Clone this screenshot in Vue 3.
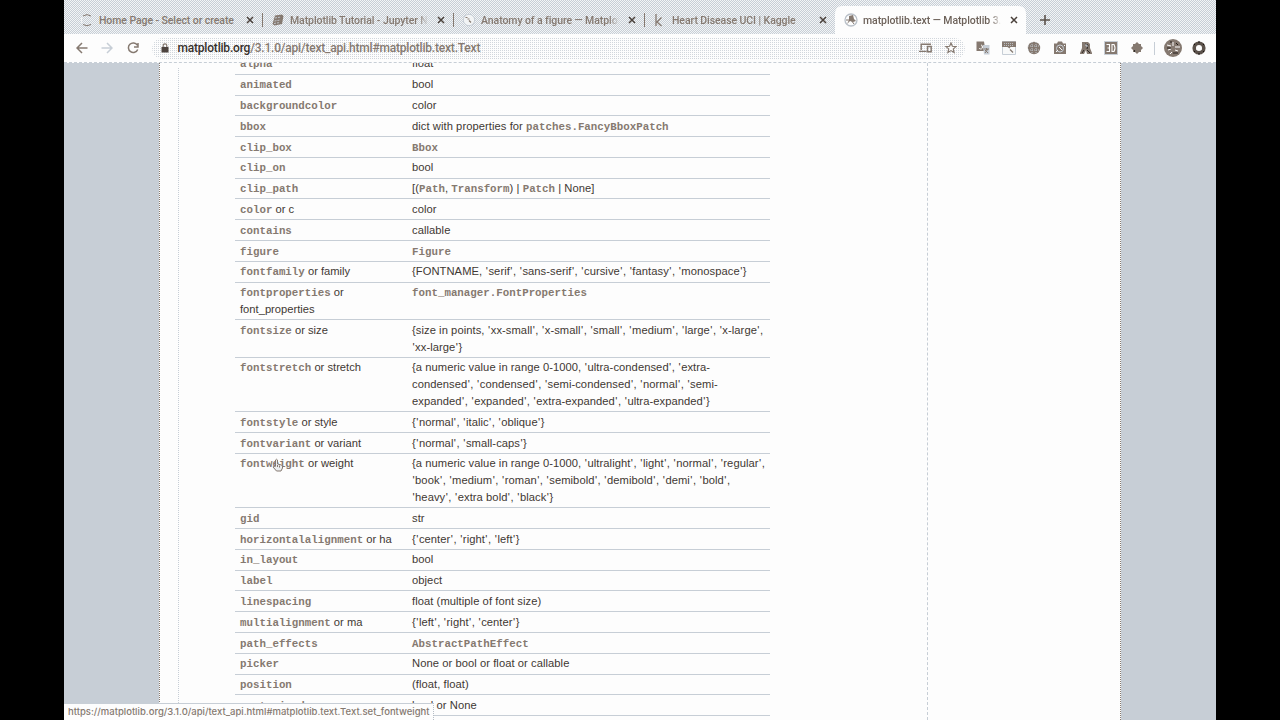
<script setup>
const tabs = [
  { title: 'Home Page - Select or create', icon: 'spinner', cls: 't1' },
  { title: 'Matplotlib Tutorial - Jupyter No', icon: 'book', cls: 't2' },
  { title: 'Anatomy of a figure — Matplotl', icon: 'globe', cls: 't3' },
  { title: 'Heart Disease UCI | Kaggle', icon: 'kaggle', cls: 't4' },
  { title: 'matplotlib.text — Matplotlib 3.1', icon: 'plot', cls: 't5', active: true },
]
const c = (code) => ({ code })
const rows = [
  [[c('alpha')], [['float']]],
  [[c('animated')], [['bool']]],
  [[c('backgroundcolor')], [['color']]],
  [[c('bbox')], [['dict with properties for ', c('patches.FancyBboxPatch')]]],
  [[c('clip_box')], [[c('Bbox')]]],
  [[c('clip_on')], [['bool']]],
  [[c('clip_path')], [['[(', c('Path'), ', ', c('Transform'), ') | ', c('Patch'), ' | None]']]],
  [[c('color'), ' or c'], [['color']]],
  [[c('contains')], [['callable']]],
  [[c('figure')], [[c('Figure')]]],
  [[c('fontfamily'), ' or family'], [["{FONTNAME, 'serif', 'sans-serif', 'cursive', 'fantasy', 'monospace'}"]]],
  [[c('fontproperties'), ' or\nfont_properties'], [[c('font_manager.FontProperties')]]],
  [[c('fontsize'), ' or size'], [["{size in points, 'xx-small', 'x-small', 'small', 'medium', 'large', 'x-large',"], ["'xx-large'}"]]],
  [[c('fontstretch'), ' or stretch'], [["{a numeric value in range 0-1000, 'ultra-condensed', 'extra-"], ["condensed', 'condensed', 'semi-condensed', 'normal', 'semi-"], ["expanded', 'expanded', 'extra-expanded', 'ultra-expanded'}"]]],
  [[c('fontstyle'), ' or style'], [["{'normal', 'italic', 'oblique'}"]]],
  [[c('fontvariant'), ' or variant'], [["{'normal', 'small-caps'}"]]],
  [[c('fontweight'), ' or weight'], [["{a numeric value in range 0-1000, 'ultralight', 'light', 'normal', 'regular',"], ["'book', 'medium', 'roman', 'semibold', 'demibold', 'demi', 'bold',"], ["'heavy', 'extra bold', 'black'}"]]],
  [[c('gid')], [['str']]],
  [[c('horizontalalignment'), ' or ha'], [["{'center', 'right', 'left'}"]]],
  [[c('in_layout')], [['bool']]],
  [[c('label')], [['object']]],
  [[c('linespacing')], [['float (multiple of font size)']]],
  [[c('multialignment'), ' or ma'], [["{'left', 'right', 'center'}"]]],
  [[c('path_effects')], [[c('AbstractPathEffect')]]],
  [[c('picker')], [['None or bool or float or callable']]],
  [[c('position')], [['(float, float)']]],
  [[c('rasterized')], [['bool or None']]],
]
// Quote marks get their own span so they can be set slightly wider.
const pieces = (line) =>
  line.flatMap((p) => (p.code ? [p] : p.split(/(')/).filter(Boolean).map((s) => (s === "'" ? { quote: s } : s))))
</script>

<template>
  <div class="screen">
    <div class="browser">
      <div class="strip">
        <div v-for="t in tabs" :key="t.title" class="tab" :class="{ active: t.active }">
          <svg class="fav" width="14" height="14" viewBox="0 0 14 14">
            <g v-if="t.icon === 'spinner'" fill="none" stroke="#857970" stroke-width="1">
              <path d="M3 3Q7 .2 11 3M3 11.5Q7 14 11 11.5" /><path d="M2 4.5Q.6 7 2 10" stroke="#fdfdfd" />
            </g>
            <g v-else-if="t.icon === 'book'">
              <path d="M4 2.5 11 1.5 12.5 3 11 11 3.5 12.5 1.5 11Z" fill="#857970" />
              <path d="M4 5l6-1M3.5 8l6-1M3 10.5l6-1" stroke="#c7ced6" stroke-width=".9" stroke-dasharray="2 1" />
            </g>
            <g v-else-if="t.icon === 'globe'">
              <circle cx="7" cy="7" r="5.7" fill="#f2f4f5" stroke="#c7ced6" />
              <path d="M3.500 4.500h2M5.500 6h2M7 7.500l2 2" fill="none" stroke="#857970" stroke-width="1.200" />
            </g>
            <path v-else-if="t.icon === 'kaggle'" d="M3 1v12M8.5 4.5 4 9l4.5 4" fill="none" stroke="#857970" stroke-width="1.3" />
            <g v-else>
              <circle cx="7" cy="7" r="6" fill="#fdfdfd" stroke="#b9c0c8" stroke-width="1.3" />
              <path d="M5 3l4-1 1 4 2 2-3 1-3-1-3 3 2-4Z" fill="#857970" /><path d="M7 7l3 4M2 7h3" stroke="#857970" />
            </g>
          </svg>
          <span class="title"><span :class="t.cls">{{ t.title }}</span></span>
          <svg class="close" width="8" height="8" viewBox="0 0 8 8"><path d="M1 1l6 6M7 1 1 7" stroke="#4a413b" stroke-width="1.5" /></svg>
        </div>
        <svg class="plus" width="12" height="12" viewBox="0 0 12 12"><path d="M6 1v10M1 6h10" stroke="#5b514a" stroke-width="1.6" /></svg>
      </div>

      <div class="toolbar">
        <div class="nav">
          <svg width="12" height="12" viewBox="0 0 12 12"><path d="M11.5 6H1.5M6 1 1 6l5 5" fill="none" stroke="#857970" stroke-width="1.5" /></svg>
          <svg width="12" height="12" viewBox="0 0 12 12"><path d="M.5 6h10M6 1l5 5-5 5" fill="none" stroke="#c7ced6" stroke-width="1.5" /></svg>
          <svg width="12" height="12" viewBox="0 0 12 12"><path d="M10.3 3.2A4.8 4.8 0 1 0 10.7 7.5M11 1v4H7" fill="none" stroke="#857970" stroke-width="1.5" /></svg>
        </div>
        <div class="pill">
          <svg class="lock" width="8" height="10" viewBox="0 0 8 10"><path d="M2.2 4V2.6a1.8 1.8 0 0 1 3.6 0V4" fill="none" stroke="#857970" stroke-width="1.2" /><path d="M.5 4h7v5.5h-7z" fill="#4d443f" /></svg>
          <span class="url"><b>matplotlib.org</b>/3.1.0/api/text_api.html#matplotlib.text.Text</span>
          <svg class="cast" width="13" height="10" viewBox="0 0 13 10"><path d="M2.2 7V1.3H12M0 8.4h7.5M8.5 3.5h3.7v5.2H8.5z" fill="none" stroke="#857970" stroke-width="1.4" /></svg>
          <svg class="star" width="12" height="12" viewBox="0 0 12 12"><path d="M6 1l1.4 3.3 3.6.3-2.7 2.3.8 3.6L6 8.6l-3.1 1.9.8-3.6L1 4.6l3.6-.3Z" fill="#fdfdfd" stroke="#857970" stroke-width="1.2" /></svg>
        </div>
        <div class="exts">
          <svg viewBox="0 0 14 14"><path d="M.5.5h7.500l1.500 9.500H.5z" fill="#857970" /><path d="M7 4h6.500v9.500H8z" fill="#c7ced6" /><path d="M3 7a2 2 0 1 0 2-3M5.5 6H7" fill="none" stroke="#fdfdfd" /><path d="M8 8h5M10.5 7v2M12 8l-3 4M9 9l3 3" stroke="#857970" /></svg>
          <svg viewBox="0 0 14 14"><path d="M.5.5h13v13H.5z" fill="#f8f9f9" stroke="#c7ced6" /><path d="M0 .5h14V6H8.500L7.500 7.500 5.500 6H0z" fill="#857970" /><path d="M2 2.500h10M2 4.500h10" stroke="#c7ced6" stroke-width=".8" stroke-dasharray="1 1" /><path d="M8 8.500l3 3" stroke="#857970" stroke-width="1.300" /></svg>
          <svg viewBox="0 0 14 14"><circle cx="7" cy="7" r="6.2" fill="#857970" /><path d="M1 5h12M1 9h12M5 1v12M9 1v12" stroke="#c7ced6" stroke-width=".9" stroke-dasharray="1 1" /></svg>
          <svg viewBox="0 0 14 14"><path d="M1 2.500h3l1-2h4l1 2h3v10.500H1z" fill="#857970" /><circle cx="7" cy="7.5" r="3.500" fill="none" stroke="#c7ced6" stroke-width="1" /><path d="M6 6l3 3M3 11l2-2M11 5l1-1" stroke="#fdfdfd" /></svg>
          <svg viewBox="0 0 14 14"><path d="M3 1h6l2 2v4l2 5v1H8l-1-4-2 4H1V12l2-5z" fill="#857970" /><path d="M6 3l3 1-1 4M5 9l-2 3M8 9l3 3" fill="none" stroke="#2b2522" /><path d="M6 4h2v2" fill="none" stroke="#c7ced6" /></svg>
          <svg viewBox="0 0 14 14"><path d="M.5.5h13v13H.5z" fill="#857970" stroke="#c7ced6" /><path d="M2.500 3.500h3v3.500h-2M5.500 7v3.500h-3M8 10.500v-7h2q2 3.500 0 7z" fill="none" stroke="#fdfdfd" stroke-width="1.1" /></svg>
          <svg viewBox="0 0 14 14"><path d="M3 3h2l2-2 2 2h2v2l2 2-2 2v2H9l-2 2-2-2H3V9L1 7l2-2z" fill="#857970" /><circle cx="4.5" cy="10" r=".7" /></svg>
        </div>
        <i class="bar"></i>
        <svg class="avatar" width="18" height="18" viewBox="0 0 18 18"><circle cx="9" cy="9" r="9" fill="#857970" /><path d="M3 6l4 1M9 3v4M11 8h5M4 11l3-1M11 11l3 1M6 15l2-2" stroke="#fdfdfd" /><path d="M6 3h2M3 9h4M9 14h5M12 4l2 2" stroke="#231d19" /></svg>
        <svg class="update" width="14" height="14" viewBox="0 0 14 14"><circle cx="7" cy="7" r="4.8" fill="#fdfdfd" stroke="#5b514a" stroke-width="3.6" /><path d="M7 0v2M2 3l1 1M12 3l-1 1M7 12v2M2 11l1-1M12 11l-1-1" stroke="#17110e" /><path d="M4.500 7 7 4.500 9.500 7v2h-5z" fill="#fdfdfd" /></svg>
      </div>

      <div class="viewport">
        <div class="page">
          <div class="gutter"></div>
          <div class="content">
            <div class="table">
              <div v-for="(r, i) in rows" :key="i" class="row">
                <div class="name"><template v-for="(p, k) in r[0]" :key="k"><code v-if="p.code">{{ p.code }}</code><template v-else>{{ p }}</template></template></div>
                <div class="desc">
                  <div v-for="(l, j) in r[1]" :key="j"><template v-for="(p, k) in pieces(l)" :key="k"><code v-if="p.code">{{ p.code }}</code><span v-else-if="p.quote" class="q">{{ p.quote }}</span><template v-else>{{ p }}</template></template></div>
                </div>
              </div>
            </div>
          </div>
          <div class="side"></div>
        </div>
        <div class="status">https://matplotlib.org/3.1.0/api/text_api.html#matplotlib.text.Text.set_fontweight</div>
        <svg class="hand" width="12" height="15" viewBox="0 0 12 15"><path d="M3.5 8V2q1-1.5 2 0v4l4 1q1.5.5 1 3l-1.500 3H4.500L1 9q0-1.500 2.500-.5" fill="#eceeef" stroke="#857970" /><path d="M5.500 7v2M7.500 7.500v2" stroke="#857970" /></svg>
      </div>
    </div>
  </div>
</template>

<style>
body { margin: 0; background: #000; overflow: hidden; }
</style>

<style scoped>
* { box-sizing: border-box; }
.screen { width: 1280px; height: 720px; padding: 0 64px; background: #000; overflow: hidden; }
.browser { height: 720px; display: flex; flex-direction: column; background: #fdfdfd; }
.strip {
  flex: none; height: 34px; padding: 6px 0 0 7px; display: flex;
  background: repeating-conic-gradient(#c7ced6 0 25%, #f3f5f6 0 50%) 0 0 / 2px 2px;
}
.tab {
  width: 191px; height: 28px; display: flex; align-items: center; padding: 0 8px 0 9px; position: relative;
  font: 500 10.5px Roboto, "Liberation Sans", sans-serif; letter-spacing: -.08px; color: #857970;
}
.tab:nth-child(-n+3)::after { content: ""; position: absolute; right: -1px; top: 7px; width: 1px; height: 14px; background: #857970; }
.tab.active { background: #fdfdfd; border-radius: 7px 7px 0 0; color: #6d625a; }
.fav { flex: none; margin-right: 5px; }
.title {
  flex: none; width: 138px; white-space: nowrap; overflow: hidden;
  -webkit-mask-image: linear-gradient(90deg, #000 128px, transparent 138px);
}
.tab:first-child .title { -webkit-mask-image: none; }
.close { margin-left: auto; }
.plus { margin: 8px 0 0 13px; }
.toolbar { flex: none; height: 29px; display: flex; align-items: center; border-bottom: 1px dashed #c7ced6; background: #fdfdfd; }
.nav { display: flex; gap: 13.500px; margin-left: 11.500px; width: 76.500px; }
.pill {
  width: 813px; height: 21px; border-radius: 11px; display: flex; align-items: center; padding: 0 8px 0 9px;
  background: conic-gradient(#fdfdfd 75%, #d1d6dc 0) 0 0 / 2px 2px;
}
.lock { margin-right: 8.500px; }
.url { font: 500 12px Roboto, "Liberation Sans", sans-serif; letter-spacing: -.2px; color: #857970; white-space: nowrap; }
.url b { font-weight: 500; color: #37302b; }
.cast { margin-left: auto; margin-right: 13px; }
.exts { display: flex; gap: 11.700px; margin-left: 11px; }
.exts svg { width: 14px; height: 14px; }
.bar { width: 1px; height: 13px; margin-left: 10px; background: #c7ced6; }
.avatar { margin-left: 9px; }
.update { margin-left: 9.500px; }
.viewport { flex: 1; min-height: 0; position: relative; overflow: hidden; background: #c7ced6; }
.page { margin: 0 95px; width: 962px; height: 657px; display: flex; background: #fdfdfd; border-left: 1px dotted #857970; border-right: 1px dotted #857970; }
.gutter { width: 19px; height: 635px; margin-top: 5px; border-right: 1px dotted #c7ced6; }
.content { width: 749px; padding-left: 56px; overflow: hidden; border-right: 1px dashed #c7ced6; }
.table { width: 535px; margin-top: -9.100px; }
.row { display: grid; grid-template-columns: 177px 1fr; padding: 1.500px 0; border-bottom: 1px solid #c7ced6; font: 11.200px/16.800px "Liberation Sans", Arial, sans-serif; color: #3f3833; }
.name { padding-left: 5px; white-space: pre; }
.desc { white-space: pre; letter-spacing: .06px; }
.q { letter-spacing: .550px; padding-left: .400px; }
code { font: bold 10.800px/1 "Liberation Mono", "Courier New", monospace; letter-spacing: 0; color: #857970; }
.status {
  position: absolute; left: 0; bottom: 0; width: 370px; height: 17px; padding-left: 4px; border-top: 1px solid #c7ced6; border-right: 1px dotted #b6bdc5;
  background: #fdfdfd; font: 500 9.500px/16px Inter, "Liberation Sans", sans-serif; color: #857970; white-space: nowrap;
}
.hand { position: absolute; left: 208px; top: 395px; }
</style>
